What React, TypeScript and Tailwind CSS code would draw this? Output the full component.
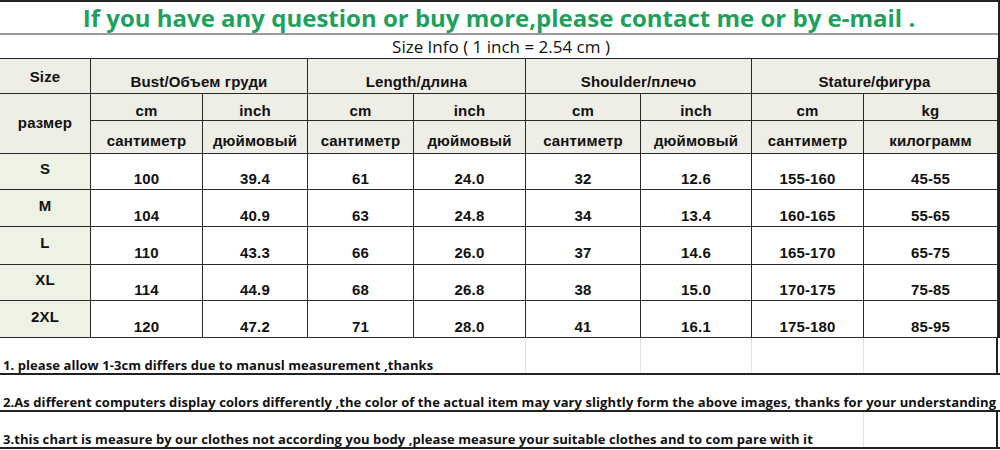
const groups = [
  { label: 'Bust/Объем груди', a: 'cm', b: 'inch', ra: 'сантиметр', rb: 'дюймовый' },
  { label: 'Length/длина', a: 'cm', b: 'inch', ra: 'сантиметр', rb: 'дюймовый' },
  { label: 'Shoulder/плечо', a: 'cm', b: 'inch', ra: 'сантиметр', rb: 'дюймовый' },
  { label: 'Stature/фигура', a: 'cm', b: 'kg', ra: 'сантиметр', rb: 'килограмм' },
];

const rows = [
  ['S', '100', '39.4', '61', '24.0', '32', '12.6', '155-160', '45-55'],
  ['M', '104', '40.9', '63', '24.8', '34', '13.4', '160-165', '55-65'],
  ['L', '110', '43.3', '66', '26.0', '37', '14.6', '165-170', '65-75'],
  ['XL', '114', '44.9', '68', '26.8', '38', '15.0', '170-175', '75-85'],
  ['2XL', '120', '47.2', '71', '28.0', '41', '16.1', '175-180', '85-95'],
];

const cols = 'grid grid-cols-[91px_112px_105px_106px_112px_115px_111px_112px_134px]';
const head = 'flex justify-center border-r border-b border-[#2a2a2a] bg-[#eeede6]';

export default function App() {
  return (
    <div className="w-[1000px] h-[450px] overflow-hidden bg-white text-[#111] font-['Liberation_Sans',Arial,sans-serif]">
      <div className="w-[1000px] border-t-2 border-r-2 border-[#222]">
        <div className="h-[33px] flex items-center justify-center border-b-2 border-[#9a9a9a] font-['Open_Sans',sans-serif] font-bold text-[24px] text-[#20a05c] tracking-[0px]">
          If you have any question or buy more,please contact me or by e-mail .
        </div>
        <div className="h-[24px] flex items-center justify-center border-b border-[#222] font-['Open_Sans',sans-serif] text-[17px] pl-1">
          Size Info ( 1 inch = 2.54 cm )
        </div>
        <div className={`${cols} grid-rows-[35px_27px_33px_36px_37px_38px_36px_37px] text-[15px] font-bold tracking-[0.15px]`}>
          <div className={`${head} items-start pt-[7px]`}>Size</div>
          {groups.map((g) => (
            <div key={g.label} className={`${head} col-span-2 items-center pt-3`}>{g.label}</div>
          ))}
          <div className={`${head} row-span-2 items-center`}>размер</div>
          {groups.map((g) => [
            <div key={g.label + 'a'} className={`${head} items-center pt-2`}>{g.a}</div>,
            <div key={g.label + 'b'} className={`${head} items-center pt-2`}>{g.b}</div>,
          ])}
          {groups.map((g) => [
            <div key={g.label + 'ra'} className={`${head} items-center pt-2`}>{g.ra}</div>,
            <div key={g.label + 'rb'} className={`${head} items-center pt-2`}>{g.rb}</div>,
          ])}
          {rows.map((r) => r.map((v, i) => (
            <div
              key={r[0] + i}
              className={
                i === 0
                  ? 'flex items-center justify-center pb-1 border-r border-b border-[#2a2a2a] bg-[#eef2e5]'
                  : 'flex items-center justify-center pt-4 border-r border-b border-[#2a2a2a]'
              }
            >
              {v}
            </div>
          )))}
        </div>
      </div>

      <div className="font-['Open_Sans',sans-serif] font-bold text-[13px] leading-[16px] tracking-[0.07px] text-[#111]">
        <div className={`${cols} h-[37px] border-b-2 border-[#222]`}>
          <div className="col-span-4 flex items-end pl-[3px] whitespace-nowrap">
            1. please allow 1-3cm differs due to manusl measurement ,thanks
          </div>
          <div className="border-r border-[#e2e2e2]" />
          <div className="border-r border-[#e2e2e2]" />
          <div className="border-r border-[#e2e2e2]" />
          <div className="border-r border-[#e2e2e2]" />
          <div className="border-r-2 border-[#222]" />
        </div>
        <div className="h-[37px] flex items-end pl-[3px] whitespace-nowrap border-b-2 border-[#222]">
          2.As different computers display colors differently ,the color of the actual item may vary slightly form the above images, thanks for your understanding
        </div>
        <div className={`${cols} h-[37px] border-b-2 border-[#222]`}>
          <div className="col-span-8 flex items-end pl-[3px] whitespace-nowrap border-r border-[#e2e2e2]">
            3.this chart is measure by our clothes not according you body ,please measure your suitable clothes and to com pare with it
          </div>
          <div className="border-r-2 border-[#222]" />
        </div>
      </div>
    </div>
  );
}
